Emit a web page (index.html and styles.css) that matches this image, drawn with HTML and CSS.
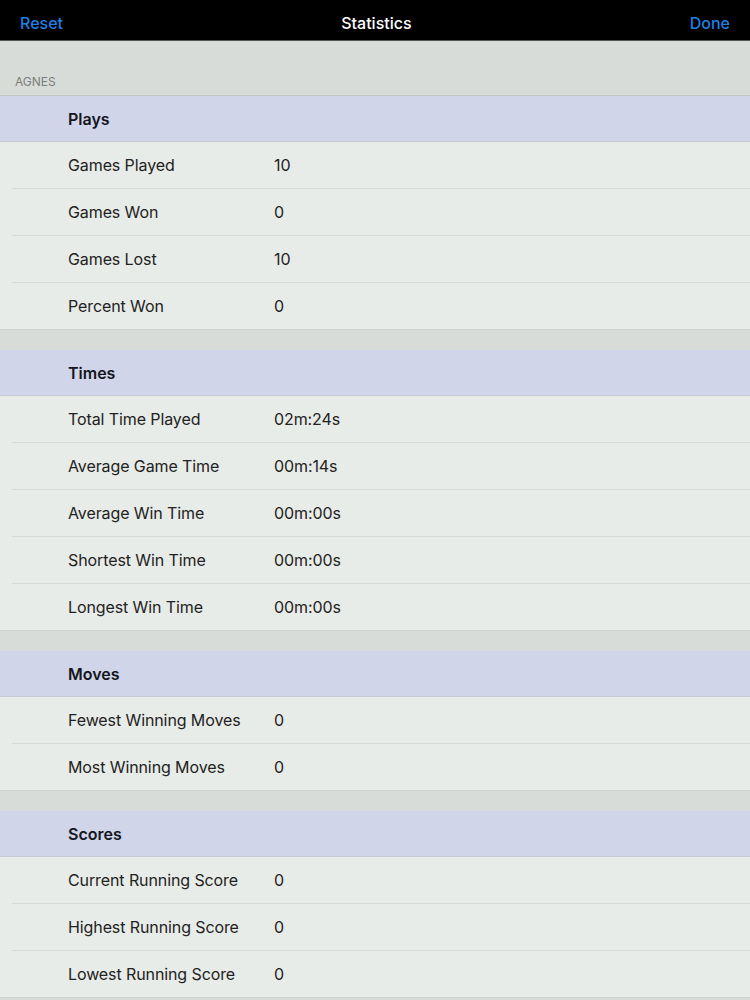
FILE: index.html
```html
<!DOCTYPE html>
<html lang="en">
<head>
    <meta charset="UTF-8">
    <meta name="viewport" content="width=device-width, initial-scale=1.0">
    <title>Statistics</title>
    <link rel="stylesheet" href="styles.css">
</head>
<body>
    <header class="navbar">
        <button class="nav-btn">Reset</button>
        <h1>Statistics</h1>
        <button class="nav-btn">Done</button>
    </header>

    <div class="player">AGNES</div>

    <section class="group">
        <div class="group-title">Plays</div>
        <div class="row"><span class="label">Games Played</span><span class="value">10</span></div>
        <div class="row"><span class="label">Games Won</span><span class="value">0</span></div>
        <div class="row"><span class="label">Games Lost</span><span class="value">10</span></div>
        <div class="row"><span class="label">Percent Won</span><span class="value">0</span></div>
    </section>

    <section class="group">
        <div class="group-title">Times</div>
        <div class="row"><span class="label">Total Time Played</span><span class="value">02m:24s</span></div>
        <div class="row"><span class="label">Average Game Time</span><span class="value">00m:14s</span></div>
        <div class="row"><span class="label">Average Win Time</span><span class="value">00m:00s</span></div>
        <div class="row"><span class="label">Shortest Win Time</span><span class="value">00m:00s</span></div>
        <div class="row"><span class="label">Longest Win Time</span><span class="value">00m:00s</span></div>
    </section>

    <section class="group">
        <div class="group-title">Moves</div>
        <div class="row"><span class="label">Fewest Winning Moves</span><span class="value">0</span></div>
        <div class="row"><span class="label">Most Winning Moves</span><span class="value">0</span></div>
    </section>

    <section class="group">
        <div class="group-title">Scores</div>
        <div class="row"><span class="label">Current Running Score</span><span class="value">0</span></div>
        <div class="row"><span class="label">Highest Running Score</span><span class="value">0</span></div>
        <div class="row"><span class="label">Lowest Running Score</span><span class="value">0</span></div>
    </section>
</body>
</html>
```

FILE: styles.css
```css
body {
    margin: 0;
    padding: 0;
    font-family: 'Inter', 'Liberation Sans', sans-serif;
    background: #d8dcd9;
    color: #222;
}

.navbar {
    height: 41px;
    box-sizing: border-box;
    background: #000;
    border-bottom: 1px solid #555;
    display: flex;
    align-items: center;
    justify-content: space-between;
    padding: 5px 20px 0;
}

.navbar h1 {
    margin: 0;
    color: #fff;
    font-size: 16px;
    font-weight: 500;
}

.nav-btn {
    background: none;
    border: none;
    padding: 0;
    color: #1f7fe3;
    font-family: inherit;
    font-size: 16px;
    font-weight: 500;
    cursor: pointer;
}

.player {
    height: 55px;
    box-sizing: border-box;
    padding: 0 15px 6px;
    display: flex;
    align-items: flex-end;
    font-size: 12px;
    color: #7a7d7b;
    border-bottom: 1px solid #c4c8c5;
}

.group {
    margin-bottom: 20px;
    background: #e8ece8;
}

.group-title {
    height: 46px;
    box-sizing: border-box;
    padding-left: 68px;
    display: flex;
    align-items: center;
    background: #d1d5e9;
    font-size: 16px;
    font-weight: 600;
    color: #141620;
    border-bottom: 1px solid #c6cad4;
}

.row {
    height: 47px;
    box-sizing: border-box;
    margin-left: 12px;
    padding-left: 56px;
    display: flex;
    align-items: center;
    font-size: 16px;
    letter-spacing: -0.1px;
    border-bottom: 1px solid #d6dad6;
}

.row:last-child {
    margin-left: 0;
    padding-left: 68px;
    border-bottom-color: #cfd3d0;
}

.label {
    width: 206px;
}
```
